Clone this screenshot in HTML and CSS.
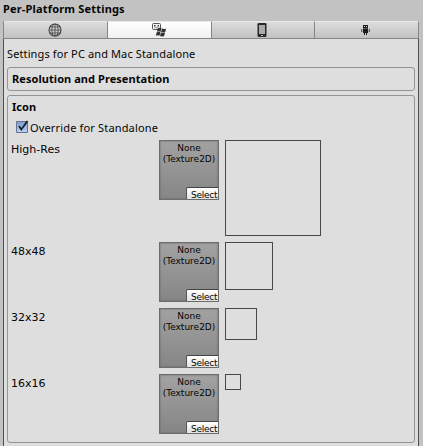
FILE: index.html
```html
<!DOCTYPE html>
<html lang="en">
<head>
<meta charset="utf-8">
<title>Per-Platform Settings</title>
<link rel="stylesheet" href="styles.css">
</head>
<body>
<h1 class="title">Per-Platform Settings</h1>
<main class="panel">
  <nav class="tabs">
    <div class="tab">
      <svg width="14" height="14" viewBox="0 0 14 14" fill="none" stroke="#444"><circle cx="7" cy="7" r="6" stroke-width="1.1"/><ellipse cx="7" cy="7" rx="3.2" ry="6" stroke-width=".8"/><path d="M7 1v12M1 7h12M2 4h10M2 10h10" stroke-width=".8"/></svg>
    </div>
    <div class="tab tab-active">
      <svg width="16" height="16" viewBox="0 0 16 16"><rect x="1.5" y="1.5" width="8" height="6" rx="1" fill="#f2f2f2" stroke="#555"/><path d="M3 3h1.5v1.5H3zM6.5 3H8v1.5H6.5z" fill="#444"/><path d="M3.5 5.7h4" stroke="#777" fill="none" stroke-width=".8"/><path d="M6.8 6.3q2-1 3.7 0l-.9 3.5q-1.8-1-3.7 0zM11 6.6q2 .9 4.2-.2l-1 3.6q-2.2 1-4.1 .1zM5.7 10.3q2-1 3.7 0l-.9 3.5q-1.8-1-3.7 0zM9.9 10.6q2 .9 4.2-.2l-1 3.6q-2.2 1-4.1 .1z" fill="#333"/></svg>
    </div>
    <div class="tab">
      <svg width="10" height="14" viewBox="0 0 10 14"><rect x=".5" width="9" height="14" rx="1.3" fill="#292929"/><path d="M2 2h6v9H2z" fill="#aaa"/><path d="M4 12h2v1H4z" fill="#bbb"/></svg>
    </div>
    <div class="tab">
      <svg width="9" height="10" viewBox="0 0 9 10"><path d="M2 0h5v8H6v2H5V8H4v2H3V8H2z" fill="#1c1c1c"/><path d="M0 4h1.3v3H0zM7.7 4H9v3H7.7z" fill="#666"/><path d="M3 1h1v1H3zM5 1h1v1H5z" fill="#ccc"/><path d="M2 3h5v.5H2z" fill="#999"/></svg>
    </div>
  </nav>
  <p class="caption">Settings for PC and Mac Standalone</p>
  <section class="box box-closed"><h2>Resolution and Presentation</h2></section>
  <section class="box box-icon">
    <h2>Icon</h2>
    <label class="override">
      <svg width="14" height="14" viewBox="0 0 14 14"><defs><linearGradient id="check" x2="0" y2="1"><stop stop-color="#7c9cd2"/><stop offset="1" stop-color="#bcd2f4"/></linearGradient></defs><path d="M1.5 1.5h11v11h-11z" fill="url(#check)" stroke="#66748f"/><path d="M4 6L6.3 9.5 12.5 1" fill="none" stroke="#15202f" stroke-width="1.8"/></svg>
      <span>Override for Standalone</span>
    </label>
    <div class="rows">
      <div class="row"><span class="size">High-Res</span><div class="texture"><span>None</span><span>(Texture2D)</span><span class="select">Select</span></div><div class="preview p96"></div></div>
      <div class="row"><span class="size">48x48</span><div class="texture"><span>None</span><span>(Texture2D)</span><span class="select">Select</span></div><div class="preview p48"></div></div>
      <div class="row"><span class="size">32x32</span><div class="texture"><span>None</span><span>(Texture2D)</span><span class="select">Select</span></div><div class="preview p32"></div></div>
      <div class="row"><span class="size">16x16</span><div class="texture"><span>None</span><span>(Texture2D)</span><span class="select">Select</span></div><div class="preview p16"></div></div>
    </div>
  </section>
</main>
</body>
</html>
```
FILE: styles.css
```css
* { box-sizing: border-box; }
html, body { height: 100%; }
body {
  margin: 0;
  padding: 0 4px 0 3px;
  display: flex;
  flex-direction: column;
  overflow: hidden;
  background: #c2c2c2;
  color: #050505;
  font: 11px/14px "Noto Sans", "Open Sans", sans-serif;
  white-space: nowrap;
}
h1, h2, p { margin: 0; }
svg { display: block; flex: none; }
.title { height: 21px; padding-top: 2px; font-size: 11px; line-height: 14px; letter-spacing: .18px; }
.panel {
  flex: 1;
  display: flex;
  flex-direction: column;
  background: #dedede;
  border-right: 1px solid #505050;
  border-left: 1px solid #505050;
}
.tabs {
  flex: none;
  display: grid;
  grid-template-columns: 104px 104px 103px 104px;
  height: 18px;
  margin: 0 -1px;
  border-left: 1px solid #858585;
  border-bottom: 1px solid #858585;
}
.tab {
  display: flex;
  justify-content: center;
  align-items: center;
  padding-right: 2px;
  border-top: 1px solid #e8e8e8;
  border-right: 1px solid #858585;
  background: linear-gradient(#dcdcdc, #c2c2c2);
}
.tab-active { background: linear-gradient(#fff, #f0f0f0); }
.caption { height: 28px; padding: 8px 0 0 3px; letter-spacing: .12px; }
.box { margin: 0 3px; border: 1px solid #959595; border-radius: 3px; }
.box-closed { height: 24px; padding: 4px 4px 0; }
.box-icon { height: 348px; margin-top: 4px; padding: 4px 3px 0; }
h2 { font-size: 11px; line-height: 14px; letter-spacing: .06px; }
.box-icon h2 { padding-left: 1px; }
.override { display: flex; height: 16px; margin-top: 6px; padding-left: 4px; letter-spacing: .16px; }
.override svg { margin-right: 1px; }
.override span { padding-top: 1px; }
.rows { display: flex; flex-direction: column; gap: 6px; margin-top: 4px; }
.row { display: grid; grid-template-columns: 148px 66px auto; align-items: start; }
.size { padding-top: 3px; font-family: "DejaVu Sans", sans-serif; }
.texture {
  position: relative;
  display: flex;
  flex-direction: column;
  align-items: center;
  width: 60px;
  height: 60px;
  padding-top: 2px;
  border: 1px solid #6c6c6c;
  background: linear-gradient(#a2a2a2, #858585);
  box-shadow: inset 0 0 2px #606060;
  font: 9px/11px "DejaVu Sans", sans-serif;
}
.select {
  position: absolute;
  right: 0;
  bottom: 0;
  width: 32px;
  height: 12px;
  padding-left: 4px;
  border-top: 1px solid #444;
  border-left: 1px solid #555;
  border-top-left-radius: 2px;
  background: linear-gradient(#fff, #e2e2e2);
  line-height: 14px;
  letter-spacing: -.25px;
}
.preview { border: 1px solid #484848; }
.p96 { width: 96px; height: 96px; }
.p48 { width: 48px; height: 48px; }
.p32 { width: 32px; height: 32px; }
.p16 { width: 16px; height: 16px; }
```
